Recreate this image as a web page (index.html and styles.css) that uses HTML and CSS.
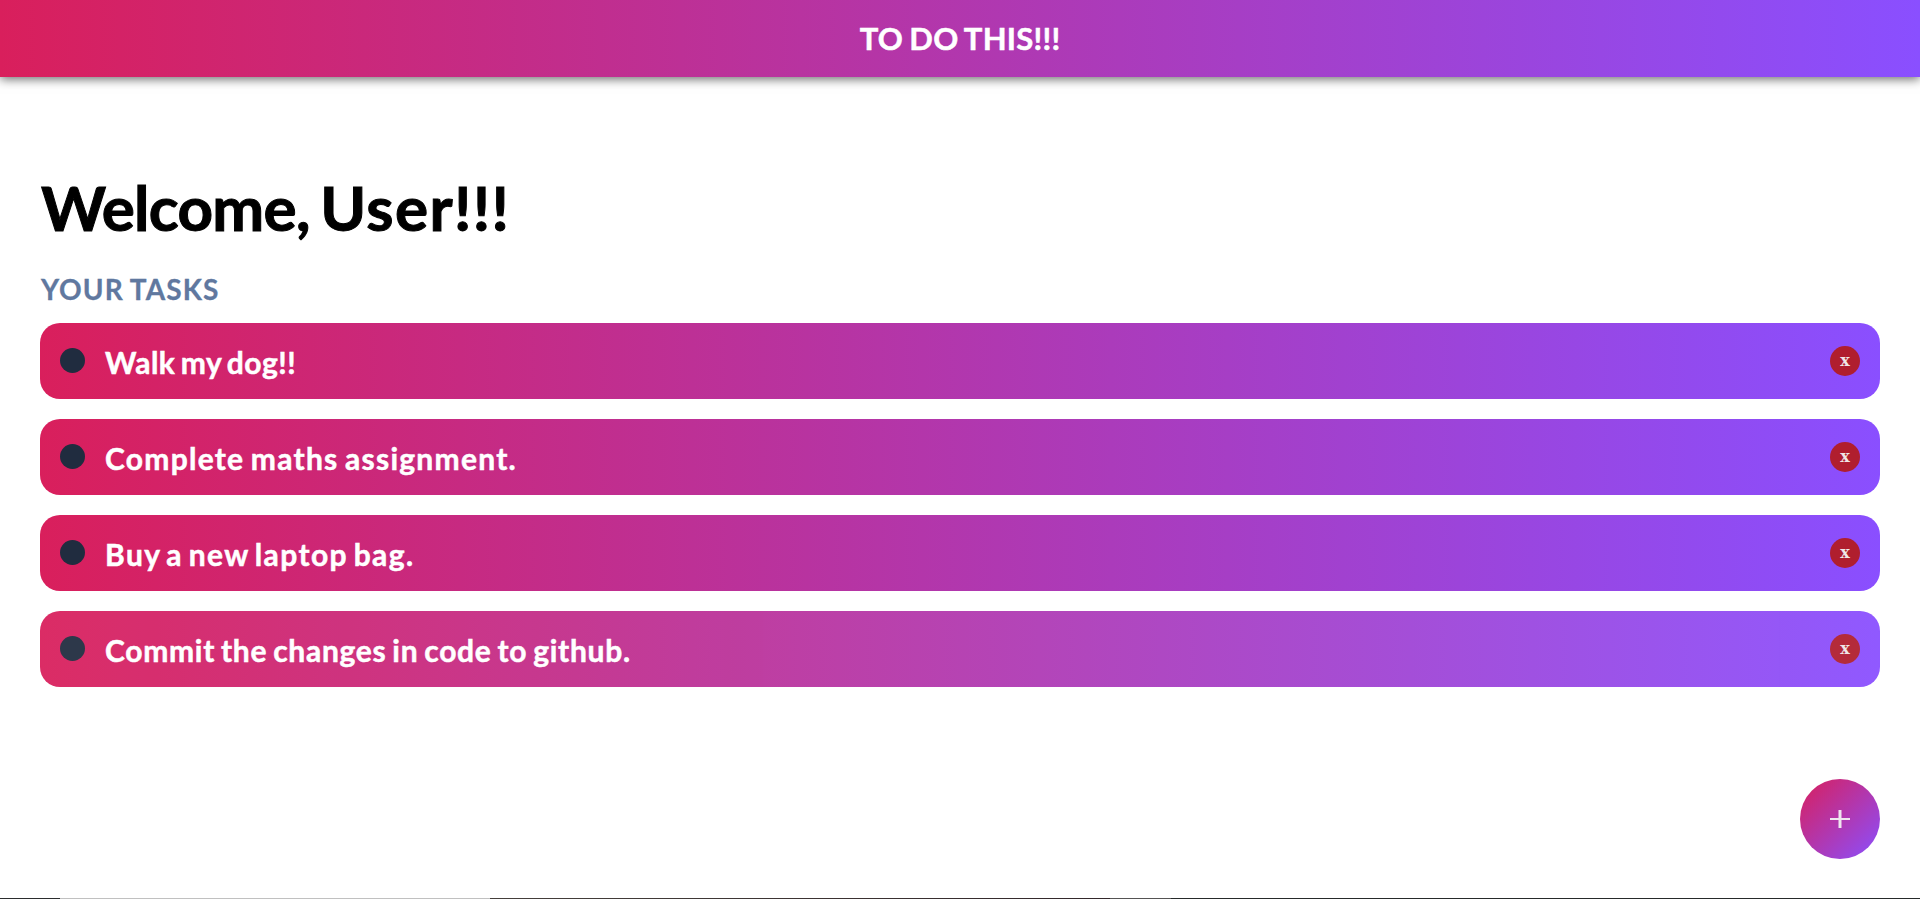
FILE: index.html
```
<!DOCTYPE html>
<html lang="en">
<head>
<meta charset="utf-8">
<title>To do this</title>
<link rel="stylesheet" href="styles.css">
</head>
<body>
<header class="header"><h1 class="brand">TO DO THIS!!!</h1></header>
<main class="main">
  <h2 class="welcome">Welcome, <span class="name">User!!!</span></h2>
  <h3 class="subtitle">YOUR TASKS</h3>
  <ul class="tasks">
    <li class="task"><span class="dot"></span><span class="label label-walk">Walk my dog!!</span><button class="remove">x</button></li>
    <li class="task"><span class="dot"></span><span class="label label-maths">Complete maths assignment.</span><button class="remove">x</button></li>
    <li class="task"><span class="dot"></span><span class="label label-bag">Buy a new laptop bag.</span><button class="remove">x</button></li>
    <li class="task task-hover"><span class="dot"></span><span class="label label-commit">Commit the changes in code to github.</span><button class="remove">x</button></li>
  </ul>
</main>
<button class="add" aria-label="Add task"><svg width="20" height="18" viewBox="0 0 20 18"><path d="M0 9H20" stroke="#efe6ef" stroke-width="2"/><path d="M10 0V18" stroke="#efe6ef" stroke-width="3"/></svg></button>
<div class="edge"></div>
</body>
</html>
```
FILE: styles.css
```
* { box-sizing: border-box; margin: 0; padding: 0; }
body {
  height: 899px;
  overflow: hidden;
  background: #fff;
  font-family: Lato, "Open Sans", sans-serif;
  font-weight: 700;
}
.header {
  height: 77px;
  display: flex;
  align-items: center;
  justify-content: center;
  background: linear-gradient(90deg, #d91f5c, #8a4fff);
  box-shadow: 0 2px 10px rgba(0, 0, 0, .6);
}
.brand {
  font-size: 31px;
  line-height: 40px;
  padding-bottom: 2px;
  color: #fff;
  white-space: nowrap;
  letter-spacing: .25px;
  word-spacing: -1.5px;
  -webkit-text-stroke: .5px currentColor;
}
.main { padding: 96px 40px 0; }
.welcome {
  font-size: 62px;
  line-height: 68px;
  padding-left: 1px;
  color: #000;
  white-space: nowrap;
  letter-spacing: -.7px;
  word-spacing: -4px;
  -webkit-text-stroke: 1px currentColor;
}
.name { letter-spacing: 1.4px; }
.subtitle {
  font-size: 28px;
  line-height: 36px;
  margin: 30px 0 16px;
  padding-left: 1px;
  color: #60789f;
  white-space: nowrap;
  letter-spacing: 1.1px;
  word-spacing: -1px;
  -webkit-text-stroke: .3px currentColor;
}
.tasks { list-style: none; display: flex; flex-direction: column; gap: 20px; }
.task {
  height: 76px;
  display: flex;
  align-items: center;
  gap: 20px;
  padding: 0 20px;
  border-radius: 20px;
  background: linear-gradient(90deg, #d91f5c, #8a4fff);
}
.task-hover { opacity: .94; }
.dot { width: 25px; height: 25px; border-radius: 50%; background: #202c3f; margin-bottom: 1px; }
.label {
  font-size: 30px;
  line-height: 40px;
  padding-top: 2px;
  color: #fff;
  white-space: nowrap;
  -webkit-text-stroke: .5px currentColor;
}
.label-walk { letter-spacing: .5px; word-spacing: -2.5px; }
.label-maths { letter-spacing: 1.25px; word-spacing: -2px; }
.label-bag { letter-spacing: 1.4px; word-spacing: -3px; }
.label-commit { letter-spacing: .7px; word-spacing: -2px; }
.remove {
  width: 30px;
  height: 30px;
  margin-left: auto;
  border: 0;
  border-radius: 50%;
  background: #b01e2e;
  color: #efe6e6;
  font: 700 16px/30px "DejaVu Serif", serif;
}
.add {
  position: fixed;
  right: 40px;
  bottom: 40px;
  width: 80px;
  height: 80px;
  display: flex;
  align-items: center;
  justify-content: center;
  border: 0;
  border-radius: 50%;
  background: linear-gradient(135deg, #d91f5c, #8a4fff);
}
.edge {
  position: fixed;
  left: 0;
  right: 0;
  bottom: 0;
  height: 1px;
  background: linear-gradient(90deg, #2b2d2e 60px, #c0c0c0 60px 490px, #45403c 490px, #33282b 1110px, #555354 1110px 1171px, #262a2a 1171px);
}
```
